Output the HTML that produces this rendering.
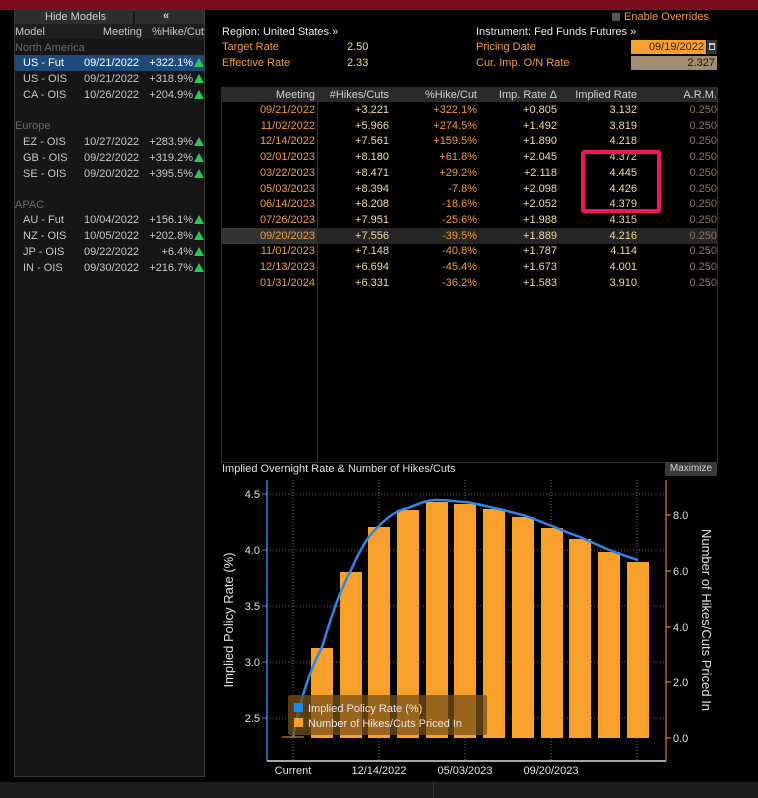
<!DOCTYPE html>
<html><head><meta charset="utf-8"><style>
*{margin:0;padding:0;box-sizing:border-box}
body{width:758px;height:798px;background:#000;position:relative;overflow:hidden;font-family:"Liberation Sans",sans-serif;font-size:11px}
.a{position:absolute;white-space:nowrap;line-height:14px}
.r{text-align:right}
.lg{color:#c8c8c8}
.sec{color:#6a6a6a}
.or{color:#f39c35}
.cr{color:#f0dca0}
.gy{color:#8a7560}
.hd{color:#d0d0d0}
.tri{display:inline-block;width:0;height:0;border-left:5px solid transparent;border-right:5px solid transparent;border-bottom:9px solid #2fc35a;vertical-align:-1px;margin-left:1px}
</style></head><body>
<div style="position:absolute;left:0;top:0;width:758px;height:10px;background:#7c0f1f"></div>

<!-- left panel -->
<div style="position:absolute;left:14px;top:10px;width:191px;height:767px;background:#161616;border:1px solid #3a3a3a"></div>
<div style="position:absolute;left:15px;top:10px;width:118px;height:14px;background:#2e2e2e"></div>
<div style="position:absolute;left:135px;top:10px;width:69px;height:14px;background:#2e2e2e"></div>
<div class="a hd" style="left:45px;top:10px">Hide Models</div>
<div class="a hd" style="left:163px;top:9px;font-weight:bold">«</div>
<div style="position:absolute;left:15px;top:24px;width:189px;height:15px;background:#1e1e1e"></div>
<div class="a lg" style="left:15px;top:25px">Model</div>
<div class="a lg r" style="left:80px;top:25px;width:62px">Meeting</div>
<div class="a lg r" style="left:146px;top:25px;width:58px">%Hike/Cut</div>
<div class="a sec" style="left:15px;top:41px">North America</div>
<div style="position:absolute;left:15px;top:55px;width:189px;height:16px;background:#1d4a7c"></div>

<div class="a lg" style="left:23px;top:56px;color:#fff">US - Fut</div><div class="a lg" style="left:84px;top:56px;color:#fff">09/21/2022</div><div class="a lg r" style="left:140px;top:56px;width:64px;color:#fff">+322.1%<span class="tri"></span></div>
<div class="a lg" style="left:23px;top:72px">US - OIS</div><div class="a lg" style="left:84px;top:72px">09/21/2022</div><div class="a lg r" style="left:140px;top:72px;width:64px">+318.9%<span class="tri"></span></div>
<div class="a lg" style="left:23px;top:88px">CA - OIS</div><div class="a lg" style="left:84px;top:88px">10/26/2022</div><div class="a lg r" style="left:140px;top:88px;width:64px">+204.9%<span class="tri"></span></div>
<div class="a sec" style="left:15px;top:119px">Europe</div>
<div class="a lg" style="left:23px;top:135px">EZ - OIS</div><div class="a lg" style="left:84px;top:135px">10/27/2022</div><div class="a lg r" style="left:140px;top:135px;width:64px">+283.9%<span class="tri"></span></div>
<div class="a lg" style="left:23px;top:151px">GB - OIS</div><div class="a lg" style="left:84px;top:151px">09/22/2022</div><div class="a lg r" style="left:140px;top:151px;width:64px">+319.2%<span class="tri"></span></div>
<div class="a lg" style="left:23px;top:167px">SE - OIS</div><div class="a lg" style="left:84px;top:167px">09/20/2022</div><div class="a lg r" style="left:140px;top:167px;width:64px">+395.5%<span class="tri"></span></div>
<div class="a sec" style="left:15px;top:198px">APAC</div>
<div class="a lg" style="left:23px;top:213px">AU - Fut</div><div class="a lg" style="left:84px;top:213px">10/04/2022</div><div class="a lg r" style="left:140px;top:213px;width:64px">+156.1%<span class="tri"></span></div>
<div class="a lg" style="left:23px;top:229px">NZ - OIS</div><div class="a lg" style="left:84px;top:229px">10/05/2022</div><div class="a lg r" style="left:140px;top:229px;width:64px">+202.8%<span class="tri"></span></div>
<div class="a lg" style="left:23px;top:245px">JP - OIS</div><div class="a lg" style="left:84px;top:245px">09/22/2022</div><div class="a lg r" style="left:140px;top:245px;width:64px">+6.4%<span class="tri"></span></div>
<div class="a lg" style="left:23px;top:261px">IN - OIS</div><div class="a lg" style="left:84px;top:261px">09/30/2022</div><div class="a lg r" style="left:140px;top:261px;width:64px">+216.7%<span class="tri"></span></div>

<!-- top info -->
<div style="position:absolute;left:612px;top:13px;width:8px;height:8px;background:#555"></div>
<div class="a or" style="left:624px;top:10px">Enable Overrides</div>
<div class="a hd" style="left:222px;top:25px;color:#e8e8e8">Region: United States »</div>
<div class="a or" style="left:222px;top:40px">Target Rate</div>
<div class="a cr" style="left:347px;top:40px">2.50</div>
<div class="a or" style="left:222px;top:56px">Effective Rate</div>
<div class="a cr" style="left:347px;top:56px">2.33</div>
<div class="a hd" style="left:476px;top:25px;color:#e8e8e8">Instrument: Fed Funds Futures »</div>
<div class="a or" style="left:476px;top:40px">Pricing Date</div>
<div class="a or" style="left:476px;top:56px">Cur. Imp. O/N Rate</div>
<div class="a r" style="left:631px;top:40px;width:75px;height:14px;background:#f7a030;color:#3a2000;padding-right:2px">09/19/2022</div>
<div style="position:absolute;left:707px;top:40px;width:10px;height:14px;background:#333"></div>
<div style="position:absolute;left:709px;top:43px;width:6px;height:7px;border:1px solid #ccc;border-top:2px solid #ccc"></div>
<div class="a r" style="left:631px;top:56px;width:86px;height:14px;background:#a08c72;color:#1a1000;padding-right:2px">2.327</div>

<!-- table -->
<div style="position:absolute;left:221px;top:87px;width:497px;height:376px;border:1px solid #2e2e2e;border-top:none"></div>
<div style="position:absolute;left:221px;top:87px;width:497px;height:15px;background:#2a2a2a"></div>
<div style="position:absolute;left:317px;top:102px;width:1px;height:360px;background:#333"></div>
<div style="position:absolute;left:221px;top:228px;width:497px;height:16px;background:#262626"></div>
<div style="position:absolute;left:221px;top:228px;width:96px;height:16px;background:#333"></div>
<div class="a hd r" style="left:240px;top:88px;width:75px">Meeting</div>
<div class="a hd r" style="left:318px;top:88px;width:71px">#Hikes/Cuts</div>
<div class="a hd r" style="left:400px;top:88px;width:77px">%Hike/Cut</div>
<div class="a hd r" style="left:480px;top:88px;width:77px">Imp. Rate Δ</div>
<div class="a hd r" style="left:560px;top:88px;width:77px">Implied Rate</div>
<div class="a hd r" style="left:650px;top:88px;width:67px">A.R.M.</div>
<div id="rows"></div>
<div class="a or r" style="left:230px;top:103px;width:85px;line-height:15.7px">09/21/2022<br>11/02/2022<br>12/14/2022<br>02/01/2023<br>03/22/2023<br>05/03/2023<br>06/14/2023<br>07/26/2023<br>09/20/2023<br>11/01/2023<br>12/13/2023<br>01/31/2024</div>
<div class="a cr r" style="left:320px;top:103px;width:69px;line-height:15.7px">+3.221<br>+5.966<br>+7.561<br>+8.180<br>+8.471<br>+8.394<br>+8.208<br>+7.951<br>+7.556<br>+7.148<br>+6.694<br>+6.331</div>
<div class="a or r" style="left:400px;top:103px;width:77px;line-height:15.7px">+322.1%<br>+274.5%<br>+159.5%<br>+61.8%<br>+29.2%<br>-7.8%<br>-18.6%<br>-25.6%<br>-39.5%<br>-40.8%<br>-45.4%<br>-36.2%</div>
<div class="a cr r" style="left:480px;top:103px;width:77px;line-height:15.7px">+0.805<br>+1.492<br>+1.890<br>+2.045<br>+2.118<br>+2.098<br>+2.052<br>+1.988<br>+1.889<br>+1.787<br>+1.673<br>+1.583</div>
<div class="a cr r" style="left:560px;top:103px;width:77px;line-height:15.7px;color:#f5d890">3.132<br>3.819<br>4.218<br>4.372<br>4.445<br>4.426<br>4.379<br>4.315<br>4.216<br>4.114<br>4.001<br>3.910</div>
<div class="a gy r" style="left:650px;top:103px;width:67px;line-height:15.7px">0.250<br>0.250<br>0.250<br>0.250<br>0.250<br>0.250<br>0.250<br>0.250<br>0.250<br>0.250<br>0.250<br>0.250</div>
<div style="position:absolute;left:581px;top:150px;width:80px;height:63px;border:4px solid #f5145c;border-radius:3px"></div>

<!-- chart -->
<div class="a hd" style="left:222px;top:462px;color:#e0e0e0">Implied Overnight Rate &amp; Number of Hikes/Cuts</div>
<div class="a hd" style="left:665px;top:462px;width:52px;height:14px;background:#3a3a3a;font-size:10px;text-align:center;line-height:14px">Maximize</div>
<svg style="position:absolute;left:0;top:0" width="758" height="798" font-family="Liberation Sans, sans-serif">
<g stroke="#666" stroke-dasharray="1,2" stroke-width="1">
<line x1="293" y1="480" x2="293" y2="761"/><line x1="379" y1="480" x2="379" y2="761"/><line x1="465" y1="480" x2="465" y2="761"/><line x1="551" y1="480" x2="551" y2="761"/><line x1="637" y1="480" x2="637" y2="761"/>
<line x1="267" y1="494" x2="666" y2="494"/><line x1="267" y1="550" x2="666" y2="550"/><line x1="267" y1="606" x2="666" y2="606"/><line x1="267" y1="662" x2="666" y2="662"/><line x1="267" y1="718" x2="666" y2="718"/>
</g>
<g fill="#f7a12c">
<rect x="311" y="648" width="22" height="90"/><rect x="340" y="572" width="22" height="166"/><rect x="368" y="527" width="22" height="211"/><rect x="397" y="510" width="22" height="228"/><rect x="426" y="502" width="22" height="236"/><rect x="454" y="504" width="22" height="234"/><rect x="483" y="509" width="22" height="229"/><rect x="512" y="517" width="22" height="221"/><rect x="541" y="528" width="22" height="210"/><rect x="569" y="539" width="22" height="199"/><rect x="598" y="552" width="22" height="186"/><rect x="627" y="562" width="22" height="176"/>
</g>
<line x1="282" y1="737" x2="304" y2="737" stroke="#f7a12c" stroke-width="1"/>
<path d="M293,737 C300,700 310,670 322,647 C332,615 340,590 351,570 C360,550 368,535 379,526 C390,515 398,510 408,508 C420,503 428,500 437,500 C450,500 458,502 466,502 C478,504 486,506 494,508 C505,510 514,513 523,515 C535,519 543,523 552,526 C563,531 571,534 580,537 C591,542 600,546 609,550 C620,554 628,557 638,560" fill="none" stroke="#2f86e8" stroke-width="2.5"/>
<rect x="288" y="695" width="199" height="40" fill="rgba(120,80,25,0.75)" rx="2"/>
<rect x="294" y="718" width="9" height="9" fill="#f7a12c"/>
<rect x="294" y="703" width="9" height="9" fill="#1e88f0"/>
<text x="308" y="712" fill="#e8e8e8" font-size="11">Implied Policy Rate (%)</text>
<text x="308" y="727" fill="#e8e8e8" font-size="11">Number of Hikes/Cuts Priced In</text>
<line x1="267" y1="480" x2="267" y2="761" stroke="#2f86e8" stroke-width="1.5"/>
<line x1="267" y1="761" x2="666" y2="761" stroke="#ddd" stroke-width="1.5"/>
<line x1="666" y1="480" x2="666" y2="761" stroke="#f7a12c" stroke-width="1"/>
<g stroke="#2f86e8"><line x1="262" y1="494" x2="267" y2="494"/><line x1="262" y1="550" x2="267" y2="550"/><line x1="262" y1="606" x2="267" y2="606"/><line x1="262" y1="662" x2="267" y2="662"/><line x1="262" y1="718" x2="267" y2="718"/></g>
<g stroke="#f7a12c"><line x1="666" y1="515" x2="671" y2="515"/><line x1="666" y1="571" x2="671" y2="571"/><line x1="666" y1="627" x2="671" y2="627"/><line x1="666" y1="682" x2="671" y2="682"/><line x1="666" y1="738" x2="671" y2="738"/></g>
<g fill="#e0e0e0" font-size="11" text-anchor="end">
<text x="260" y="498">4.5</text><text x="260" y="554">4.0</text><text x="260" y="610">3.5</text><text x="260" y="666">3.0</text><text x="260" y="722">2.5</text>
</g>
<g fill="#e0e0e0" font-size="11">
<text x="673" y="519">8.0</text><text x="673" y="575">6.0</text><text x="673" y="631">4.0</text><text x="673" y="686">2.0</text><text x="673" y="742">0.0</text>
</g>
<g fill="#e0e0e0" font-size="11" text-anchor="middle">
<text x="293" y="774">Current</text><text x="379" y="774">12/14/2022</text><text x="465" y="774">05/03/2023</text><text x="551" y="774">09/20/2023</text>
</g>
<text transform="translate(233,620) rotate(-90)" fill="#e0e0e0" font-size="13" text-anchor="middle">Implied Policy Rate (%)</text>
<text transform="translate(702,620) rotate(90)" fill="#e0e0e0" font-size="13" text-anchor="middle">Number of Hikes/Cuts Priced In</text>
</svg>
<div style="position:absolute;left:0;top:782px;width:758px;height:16px;background:#1c1c1c"></div>
<div style="position:absolute;left:433px;top:782px;width:1px;height:16px;background:#333"></div>
</body></html>
